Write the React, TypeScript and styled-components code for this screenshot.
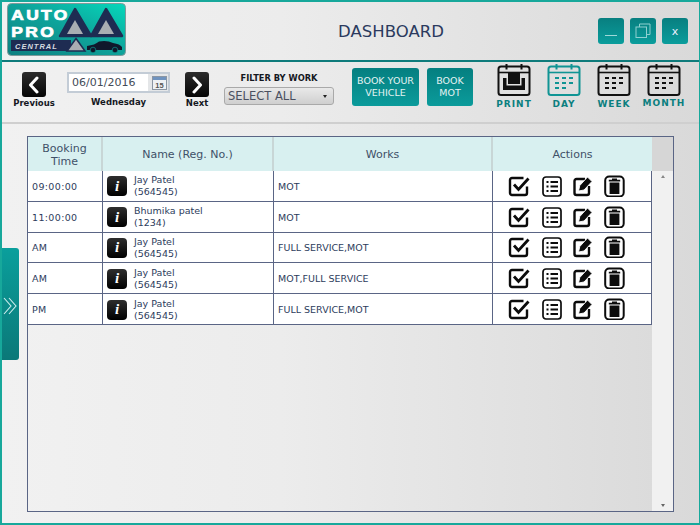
import React from "react";
import styled, { createGlobalStyle } from "styled-components";

const GlobalStyle = createGlobalStyle`
  html, body {
    margin: 0;
    padding: 0;
    background: #e6e6e6;
  }
  * {
    box-sizing: border-box;
  }
`;

const Page = styled.div`
  position: relative;
  width: 700px;
  height: 525px;
  border: 2px solid #17a89b;
  border-right-width: 1px;
  overflow: hidden;
  display: flex;
  flex-direction: column;
  font-family: "DejaVu Sans", Verdana, sans-serif;
  color: #2d3c5c;
  background: linear-gradient(90deg, #f1f1f1 0%, #ececec 40%, #d9d9d9 100%);
`;

const Header = styled.header`
  height: 60px;
  flex: none;
  display: flex;
  align-items: center;
  padding: 0 11px 0 5px;
  border-bottom: 2.5px solid #0e7b7b;
`;

const Title = styled.h1`
  flex: 1;
  margin: 0;
  padding: 1px 0 0 58px;
  text-align: center;
  font-size: 16.5px;
  font-weight: 400;
  color: #2b3a5e;
`;

const WindowButtons = styled.div`
  display: flex;
  gap: 6px;
`;

const WindowButton = styled.button`
  width: 26px;
  height: 26px;
  padding: 0;
  border: 0;
  border-radius: 3px;
  display: flex;
  align-items: center;
  justify-content: center;
  font-family: inherit;
  font-size: 11px;
  color: #eef;
  background: linear-gradient(180deg, #087f80 0%, #0a9d9c 100%);
`;

const Toolbar = styled.div`
  height: 62px;
  flex: none;
  display: flex;
  align-items: flex-start;
  border-bottom: 2px solid #cfcfcf;
  padding-left: 20px;
`;

const NavGroup = styled.div<{ $width: number; $left: number }>`
  width: ${(p) => p.$width}px;
  margin-left: ${(p) => p.$left}px;
  display: flex;
  flex-direction: column;
  align-items: center;
  padding-top: 10px;
`;

const NavButton = styled.div`
  width: 24px;
  height: 25px;
  border-radius: 3px;
  background: linear-gradient(180deg, #2c2c2c, #050505);
  display: flex;
  align-items: center;
  justify-content: center;
`;

const SmallLabel = styled.span`
  font-size: 8.5px;
  line-height: 12px;
  font-weight: 700;
  color: #15181f;
  white-space: nowrap;
`;

const DateGroup = styled.div`
  width: 103px;
  margin-left: 21px;
  padding-top: 10px;
  display: flex;
  flex-direction: column;
  align-items: center;
`;

const DateField = styled.div`
  width: 103px;
  height: 21px;
  display: flex;
  align-items: center;
  justify-content: space-between;
  padding: 0 1px 0 3px;
  border: 2px solid #c3ccd6;
  background: linear-gradient(90deg, #fff 80%, #e4e6e8 80%);
  font-size: 11px;
  color: #444c58;
`;

const DateLabel = styled(SmallLabel)`
  margin-top: 3px;
`;

const FilterGroup = styled.div`
  width: 110px;
  margin-left: 15px;
  padding-top: 10px;
  display: flex;
  flex-direction: column;
  align-items: center;
`;

const FilterLabel = styled(SmallLabel)`
  font-size: 8.3px;
  line-height: 13px;
`;

const SelectBox = styled.div`
  width: 110px;
  height: 18px;
  margin-top: 2px;
  padding: 0 6px 0 3px;
  display: flex;
  align-items: center;
  justify-content: space-between;
  border: 1px solid #a9a9a9;
  border-radius: 3px;
  background: linear-gradient(180deg, #e9e9e9, #cfcfcf);
  font-size: 11.5px;
  color: #4a5060;
  &::after {
    content: "";
    border-left: 2.5px solid transparent;
    border-right: 2.5px solid transparent;
    border-top: 3px solid #222;
  }
`;

const BookButton = styled.button<{ $width: number; $left: number }>`
  width: ${(p) => p.$width}px;
  height: 38px;
  margin: 6px 0 0 ${(p) => p.$left}px;
  padding: 0;
  border: 0;
  border-radius: 3px;
  font-family: inherit;
  font-size: 9.5px;
  line-height: 12px;
  color: #e4f3f3;
  background: linear-gradient(180deg, #057f80 0%, #0b9b9b 100%);
`;

const ViewGroup = styled.div`
  margin-left: 24px;
  display: flex;
  gap: 16px;
  padding-top: 1px;
`;

const ViewItem = styled.div<{ $active?: boolean }>`
  width: 34px;
  display: flex;
  flex-direction: column;
  align-items: center;
  color: ${(p) => (p.$active ? "#109494" : "#111")};
`;

const ViewLabel = styled.span<{ $lift?: boolean }>`
  margin-top: ${(p) => (p.$lift ? 0.5 : 1.5)}px;
  font-size: 9px;
  line-height: 11px;
  font-weight: 700;
  letter-spacing: 1px;
  color: #0b7f7f;
  white-space: nowrap;
`;

const Content = styled.main`
  flex: 1;
  padding: 12px 25px 11px 25px;
  display: flex;
`;

const TablePanel = styled.section`
  flex: 1;
  display: flex;
  border: 1px solid #5a6585;
`;

const TableArea = styled.div`
  width: 624px;
  display: flex;
  flex-direction: column;
`;

const HeaderRow = styled.div`
  height: 34px;
  display: grid;
  grid-template-columns: 75px 171px 219px 159px;
  background: #d8f0f0;
`;

const HeadCell = styled.div`
  display: flex;
  align-items: center;
  justify-content: center;
  padding-top: 1px;
  text-align: center;
  font-size: 11px;
  line-height: 13px;
  color: #3f5168;
  border-right: 2px solid #c8d6d6;
  &:last-child {
    border-right: 0;
  }
`;

const Row = styled.div`
  height: 30.8px;
  display: grid;
  grid-template-columns: 75px 171px 219px 159px;
  background: #fff;
  border-bottom: 1px solid #5a6585;
  border-right: 1px solid #5a6585;
`;

const Cell = styled.div`
  display: flex;
  align-items: center;
  padding: 1px 0 0 4px;
  font-size: 9.5px;
  color: #2d3c5c;
  border-right: 1px solid #5a6585;
  &:last-child {
    border-right: 0;
  }
`;

const TimeCell = styled(Cell)`
  letter-spacing: 0.35px;
`;

const NameCell = styled(Cell)`
  gap: 7px;
`;

const InfoBadge = styled.span`
  width: 20px;
  height: 20px;
  flex: none;
  border-radius: 4px;
  display: flex;
  align-items: center;
  justify-content: center;
  background: linear-gradient(180deg, #2e2e2e, #000);
  color: #fff;
  font-family: "Liberation Serif", serif;
  font-style: italic;
  font-weight: 700;
  font-size: 15px;
`;

const NameText = styled.div`
  font-size: 9.5px;
  line-height: 12px;
`;

const ActionCell = styled(Cell)`
  padding: 0 0 0 15px;
  gap: 11.6px;
  color: #0c0c0c;
`;

const ScrollTrack = styled.div`
  flex: 1;
  display: flex;
  flex-direction: column;
  background: #f1f1f1;
`;

const ScrollCap = styled.div`
  height: 34px;
  background: #d6d6d6;
`;

const ScrollBody = styled.div`
  flex: 1;
  display: flex;
  flex-direction: column;
  align-items: center;
  justify-content: space-between;
  padding: 4px 0 4px;
`;

const Arrow = styled.span<{ $down?: boolean }>`
  width: 0;
  height: 0;
  border-left: 2.5px solid transparent;
  border-right: 2.5px solid transparent;
  ${(p) =>
    p.$down ? "border-top: 3px solid #666;" : "border-bottom: 3px solid #888;"}
`;

const SideTab = styled.div`
  position: absolute;
  left: -2px;
  top: 246px;
  width: 19px;
  height: 112px;
  border-radius: 0 3px 3px 0;
  display: flex;
  align-items: center;
  justify-content: center;
  padding-top: 4px;
  background: linear-gradient(180deg, #0a9f9c 0%, #0b7878 100%);
`;

const rows = [
  { time: "09:00:00", name: "Jay Patel", reg: "(564545)", works: "MOT" },
  { time: "11:00:00", name: "Bhumika patel", reg: "(1234)", works: "MOT" },
  { time: "AM", name: "Jay Patel", reg: "(564545)", works: "FULL SERVICE,MOT" },
  { time: "AM", name: "Jay Patel", reg: "(564545)", works: "MOT,FULL SERVICE" },
  { time: "PM", name: "Jay Patel", reg: "(564545)", works: "FULL SERVICE,MOT" },
];

function Logo() {
  return (
    <svg width="119" height="53" viewBox="0 0 119 53" style={{ flex: "none", marginTop: -3 }}>
      <defs>
        <linearGradient id="logoBg" x1="0" y1="1" x2="1" y2="0">
          <stop offset="0" stopColor="#0f7f80" />
          <stop offset="0.55" stopColor="#0ea59c" />
          <stop offset="1" stopColor="#05d8bb" />
        </linearGradient>
      </defs>
      <rect x="0.5" y="0.5" width="118" height="52" rx="4" fill="url(#logoBg)" stroke="#7f9a9a" />
      <path d="M68 6 L84 33 L53 33 Z" fill="#1e2c52" stroke="#1e2c52" strokeWidth="2.5" strokeLinejoin="round" />
      <path d="M99 6 L115 33 L84 33 Z" fill="#1e2c52" stroke="#1e2c52" strokeWidth="2.5" strokeLinejoin="round" />
      <path d="M68 17 L76 31 L60 31 Z" fill="#a9aeb2" />
      <path d="M99 17 L107 31 L91 31 Z" fill="#a9aeb2" />
      <g transform="scale(1.2 1)" fontFamily="Liberation Sans, sans-serif" fontWeight="700" fontSize="14.5" letterSpacing="2" stroke="#fff" strokeWidth="0.7" fill="#fff">
        <text x="3.5" y="17">AUTO</text>
        <text x="3.5" y="34">PRO</text>
      </g>
      <rect x="4" y="37" width="60" height="11" fill="#1e2c52" />
      <text x="8" y="46" fontFamily="Liberation Sans, sans-serif" fontStyle="italic" fontWeight="700" fontSize="7.5" letterSpacing="1" fill="#d6dbe0">CENTRAL</text>
      <path d="M69 35.5 L78 48 L60 48 Z" fill="#a9aeb2" stroke="#1e2c52" strokeWidth="1.5" />
      <path d="M80 47 L80 43 Q88 42 92 38.5 Q100 37 106 40 Q113 41 115 44 L115 47 Z" fill="#10182c" />
      <circle cx="86" cy="47" r="2.8" fill="#10182c" stroke="#0ea59c" strokeWidth="0.6" />
      <circle cx="108" cy="47" r="2.8" fill="#10182c" stroke="#0ea59c" strokeWidth="0.6" />
    </svg>
  );
}

function RestoreIcon() {
  return (
    <svg width="16" height="16" viewBox="0 0 16 16" fill="none" stroke="#8fd0d0" strokeWidth="1">
      <rect x="1" y="4" width="10.5" height="10.5" />
      <path d="M4.5 4 V1 H15 V11.5 H11.5" />
    </svg>
  );
}

function Chevron({ left }: { left?: boolean }) {
  return (
    <svg width="14" height="18" viewBox="0 0 14 18" fill="none" stroke="#fff" strokeWidth="3" strokeLinecap="round" strokeLinejoin="round">
      <path d={left ? "M10 2 L3.5 9 L10 16" : "M4 2 L10.5 9 L4 16"} />
    </svg>
  );
}

function SmallCalendar() {
  return (
    <svg width="15" height="14" viewBox="0 0 15 14">
      <rect x="0.5" y="0.5" width="14" height="13" fill="#eef1f4" stroke="#8b96a3" />
      <rect x="1" y="1" width="13" height="3" fill="#6f93bf" />
      <text x="7.5" y="12" textAnchor="middle" fontFamily="Liberation Sans, sans-serif" fontWeight="700" fontSize="7.5" fill="#555">15</text>
    </svg>
  );
}

function CalendarFrame({ children }: { children: React.ReactNode }) {
  return (
    <svg width="34" height="34" viewBox="0 0 34 34" fill="none" stroke="currentColor" strokeLinecap="butt">
      <rect x="1.5" y="3.5" width="31" height="28.5" rx="2.5" strokeWidth="2" />
      <path d="M1.5 9.5 H32.5" strokeWidth="1.6" />
      <path d="M9.5 1 V6.5 M24.5 1 V6.5" strokeWidth="2" />
      {children}
    </svg>
  );
}

function CalendarDots() {
  return (
    <g stroke="none" fill="currentColor">
      <rect x="8" y="14" width="4" height="2" />
      <rect x="15" y="14" width="4" height="2" />
      <rect x="22" y="14" width="4" height="2" />
      <rect x="8" y="19" width="4" height="2" />
      <rect x="15" y="19" width="4" height="2" />
      <rect x="22" y="19" width="4" height="2" />
      <rect x="8" y="24" width="4" height="2" />
      <rect x="15" y="24" width="4" height="2" />
    </g>
  );
}

function PrintGlyph() {
  return (
    <g stroke="none" fill="currentColor">
      <rect x="11" y="10" width="12" height="11" />
      <path d="M6 15 H9.5 V22.5 H24.5 V15 H28 V27 H6 Z" />
    </g>
  );
}

function CheckIcon() {
  return (
    <svg width="22" height="22" viewBox="0 0 22 22" fill="none" stroke="currentColor" strokeWidth="2.4">
      <path d="M19 11.5 V18 A2 2 0 0 1 17 20 H4 A2 2 0 0 1 2 18 V5 A2 2 0 0 1 4 3 H15.5" />
      <path d="M6 9.5 L10.5 14.5 L20.5 3.5" strokeWidth="2.8" />
    </svg>
  );
}

function ListIcon() {
  return (
    <svg width="20" height="22" viewBox="0 0 20 22" fill="none" stroke="currentColor" strokeWidth="1.7">
      <rect x="1" y="2" width="18" height="19" rx="3" />
      <path d="M4.5 7 H6.5 M8.5 7 H16 M4.5 11.5 H6.5 M8.5 11.5 H16 M4.5 16 H6.5 M8.5 16 H16" strokeWidth="1.9" />
    </svg>
  );
}

function EditIcon() {
  return (
    <svg width="19" height="22" viewBox="0 0 19 22" fill="none" stroke="currentColor" strokeWidth="2.4">
      <path d="M12 4 H3.5 A2 2 0 0 0 1.5 6 V18 A2 2 0 0 0 3.5 20 H14 A2 2 0 0 0 16 18 V11" />
      <path d="M5.5 16 L6.8 10.5 L14.5 2 L19 6.5 L11 15 Z" fill="currentColor" stroke="#fff" strokeWidth="0.9" />
    </svg>
  );
}

function TrashIcon() {
  return (
    <svg width="21" height="22" viewBox="0 0 21 22" fill="none" stroke="currentColor" strokeWidth="2">
      <rect x="1.2" y="1.5" width="18.5" height="20" rx="4" />
      <path d="M4.8 4.8 H16.2 V6.6 H4.8 Z M8 3.6 H13 V4.8 H8 Z M5.6 7.6 H15.4 V19 H5.6 Z" fill="currentColor" stroke="none" />
    </svg>
  );
}

function App() {
  return (
    <Page>
      <GlobalStyle />
      <Header>
        <Logo />
        <Title>DASHBOARD</Title>
        <WindowButtons>
          <WindowButton>
            <svg width="14" height="14" viewBox="0 0 14 14">
              <rect x="1" y="11" width="12" height="1" fill="#9fd8d8" />
            </svg>
          </WindowButton>
          <WindowButton>
            <RestoreIcon />
          </WindowButton>
          <WindowButton>x</WindowButton>
        </WindowButtons>
      </Header>
      <Toolbar>
        <NavGroup $width={24} $left={0}>
          <NavButton>
            <Chevron left />
          </NavButton>
          <SmallLabel>Previous</SmallLabel>
        </NavGroup>
        <DateGroup>
          <DateField>
            06/01/2016
            <SmallCalendar />
          </DateField>
          <DateLabel>Wednesday</DateLabel>
        </DateGroup>
        <NavGroup $width={24} $left={15}>
          <NavButton>
            <Chevron />
          </NavButton>
          <SmallLabel>Next</SmallLabel>
        </NavGroup>
        <FilterGroup>
          <FilterLabel>FILTER BY WORK</FilterLabel>
          <SelectBox>SELECT ALL</SelectBox>
        </FilterGroup>
        <BookButton $width={67} $left={18}>
          BOOK YOUR
          <br />
          VEHICLE
        </BookButton>
        <BookButton $width={46} $left={8}>
          BOOK
          <br />
          MOT
        </BookButton>
        <ViewGroup>
          <ViewItem>
            <CalendarFrame>
              <PrintGlyph />
            </CalendarFrame>
            <ViewLabel>PRINT</ViewLabel>
          </ViewItem>
          <ViewItem $active>
            <CalendarFrame>
              <CalendarDots />
            </CalendarFrame>
            <ViewLabel>DAY</ViewLabel>
          </ViewItem>
          <ViewItem>
            <CalendarFrame>
              <CalendarDots />
            </CalendarFrame>
            <ViewLabel>WEEK</ViewLabel>
          </ViewItem>
          <ViewItem>
            <CalendarFrame>
              <CalendarDots />
            </CalendarFrame>
            <ViewLabel $lift>MONTH</ViewLabel>
          </ViewItem>
        </ViewGroup>
      </Toolbar>
      <Content>
        <TablePanel>
          <TableArea>
            <HeaderRow>
              <HeadCell>
                Booking
                <br />
                Time
              </HeadCell>
              <HeadCell>Name (Reg. No.)</HeadCell>
              <HeadCell>Works</HeadCell>
              <HeadCell>Actions</HeadCell>
            </HeaderRow>
            {rows.map((row, i) => (
              <Row key={i}>
                <TimeCell>{row.time}</TimeCell>
                <NameCell>
                  <InfoBadge>i</InfoBadge>
                  <NameText>
                    {row.name}
                    <br />
                    {row.reg}
                  </NameText>
                </NameCell>
                <Cell>{row.works}</Cell>
                <ActionCell>
                  <CheckIcon />
                  <ListIcon />
                  <EditIcon />
                  <TrashIcon />
                </ActionCell>
              </Row>
            ))}
          </TableArea>
          <ScrollTrack>
            <ScrollCap />
            <ScrollBody>
              <Arrow />
              <Arrow $down />
            </ScrollBody>
          </ScrollTrack>
        </TablePanel>
      </Content>
      <SideTab>
        <svg width="16" height="20" viewBox="0 0 16 20" fill="none" stroke="#cfeeee" strokeWidth="1.1">
          <path d="M2 2 L9 10 L2 18 M7 2 L14 10 L7 18" />
        </svg>
      </SideTab>
    </Page>
  );
}

export default App;
